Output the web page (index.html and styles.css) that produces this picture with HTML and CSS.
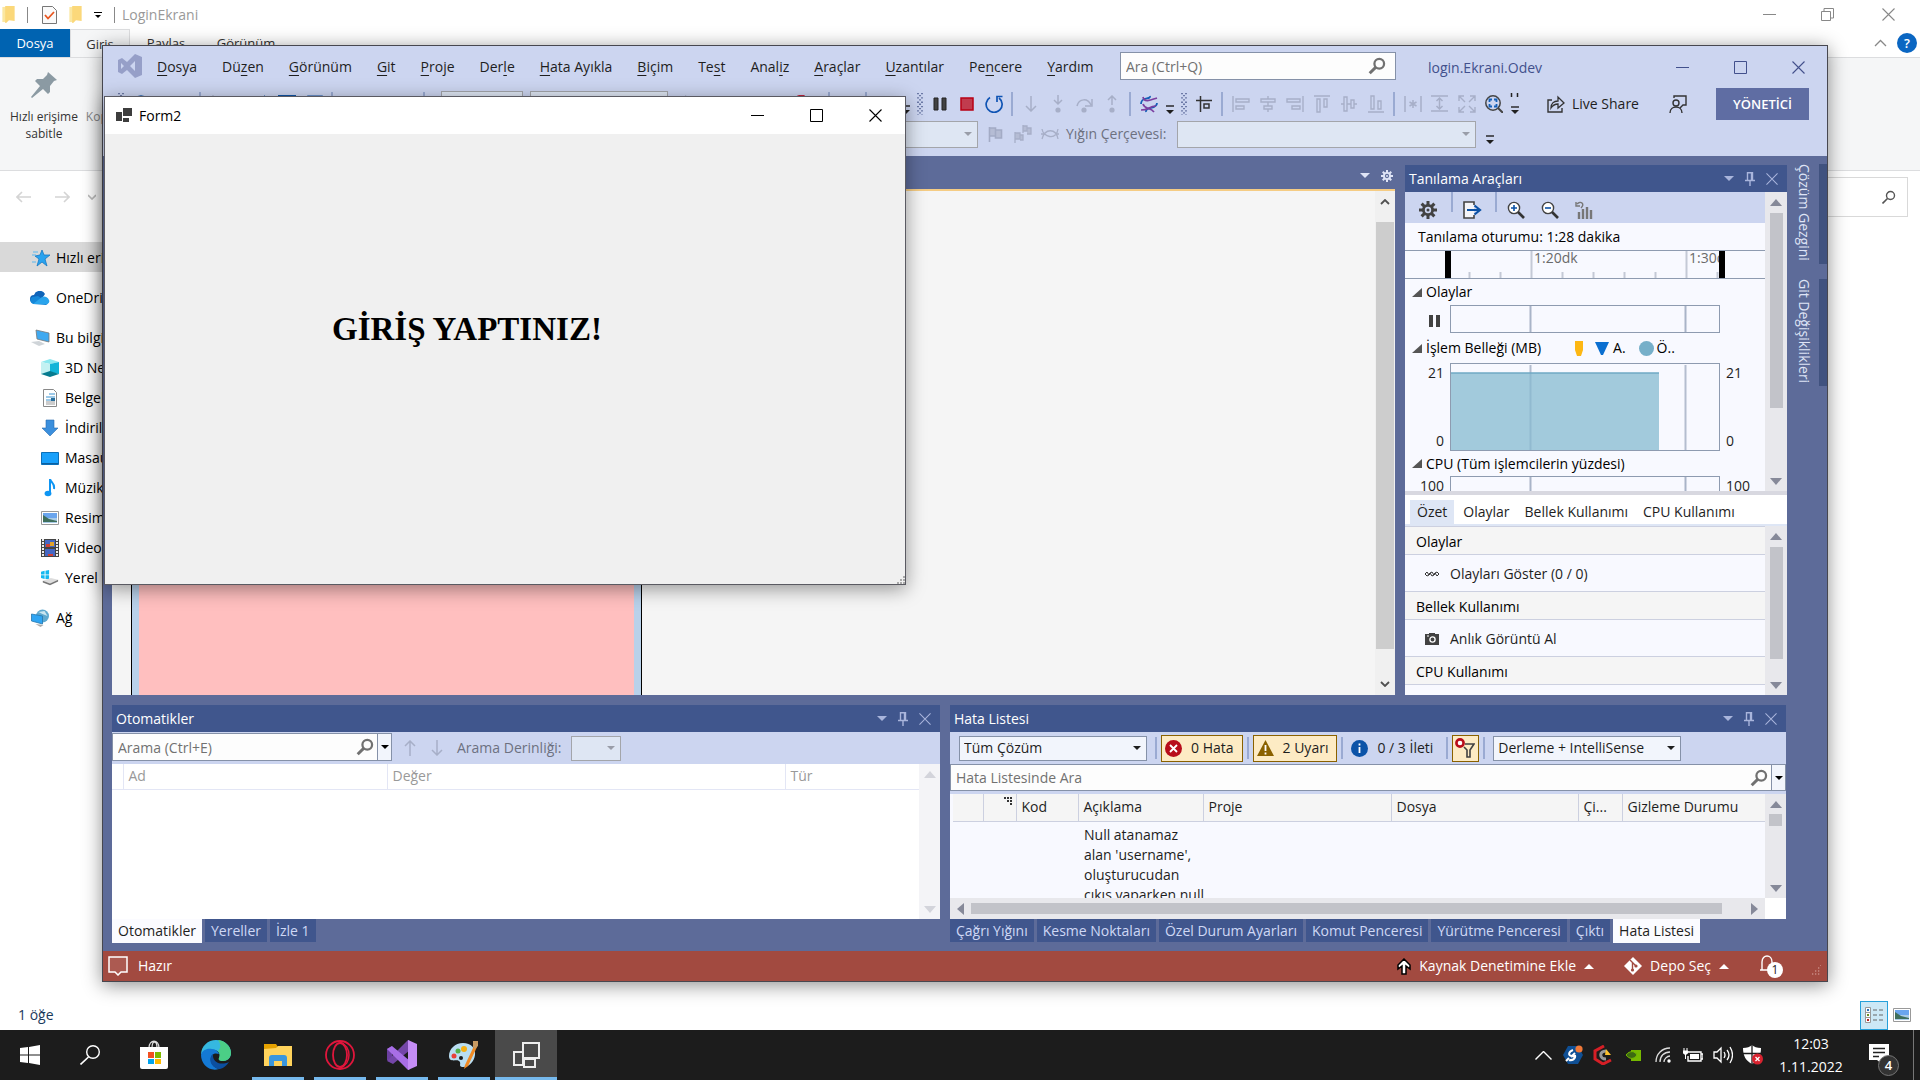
FILE: index.html
```html
<!DOCTYPE html>
<html lang="tr">
<head>
<meta charset="utf-8">
<title>LoginEkrani</title>
<link rel="stylesheet" href="styles.css">
</head>
<body>
<svg class="sprite" aria-hidden="true">
  <symbol id="folder" viewBox="0 0 13 18"><path d="M0 1h4v16H0z" fill="#fbe7a1"/><path d="M3 0h10v16l-6-1-3 3H3z" fill="#fbd87a"/></symbol>
  <symbol id="caret" viewBox="0 0 10 5"><path d="M0 0h10L5 5z" fill="currentColor"/></symbol>
  <symbol id="more" viewBox="0 0 10 10"><path d="M1 1h8M1 1" stroke="currentColor" stroke-width="1.4"/><path d="M1 5h8L5 9z" fill="currentColor"/></symbol>
  <symbol id="mag" viewBox="0 0 16 16"><circle cx="10" cy="6" r="4.3" fill="none" stroke="currentColor" stroke-width="2"/><path d="M7 9l-5.5 5.5" stroke="currentColor" stroke-width="2.6"/></symbol>
  <symbol id="min" viewBox="0 0 13 13"><path d="M0 6.5h13" stroke="currentColor"/></symbol>
  <symbol id="max" viewBox="0 0 13 13"><path d="M.5.5h12v12H.5z" fill="none" stroke="currentColor"/></symbol>
  <symbol id="close" viewBox="0 0 13 13"><path d="M.5.5l12 12M12.5.5l-12 12" stroke="currentColor" stroke-width="1.1"/></symbol>
  <symbol id="pin" viewBox="0 0 10 14"><path d="M2.5 8V.8h5V8M0 8.5h10M5 8v6M6.5 1v7" fill="none" stroke="currentColor" stroke-width="1.4"/></symbol>
  <symbol id="gear" viewBox="0 0 18 18"><g stroke="currentColor" stroke-width="3"><path d="M9 0v18M0 9h18M2.6 2.6l12.8 12.8M15.4 2.6L2.6 15.4"/></g><circle cx="9" cy="9" r="6" fill="currentColor"/><circle cx="9" cy="9" r="3.2" fill="var(--hole)"/><circle cx="9" cy="9" r="1.5" fill="currentColor"/></symbol>
  <symbol id="grip" viewBox="0 0 6 22"><path d="M1 0v22M5 0v22" stroke="#3b4a80" stroke-width="1.3" stroke-dasharray="1.3 3"/><path d="M3 2v20" stroke="#3b4a80" stroke-width="1.3" stroke-dasharray="1.3 3"/></symbol>
  <symbol id="up" viewBox="0 0 12 16"><path d="M6 16V1M1 6l5-5 5 5" fill="none" stroke="currentColor" stroke-width="1.5"/></symbol>
  <symbol id="down" viewBox="0 0 12 16"><path d="M6 0v15M1 10l5 5 5-5" fill="none" stroke="currentColor" stroke-width="1.5"/></symbol>
  <symbol id="picture" viewBox="0 0 18 14"><path d="M.5.5h17v13H.5z" fill="#fff" stroke="#999"/><path d="M2 2h14v5H2z" fill="#6aa5ee"/><path d="M2 7h14v5H2z" fill="#a9cbe8"/><path d="M2 4l6 4 8 2v1H2z" fill="#3f6f5c"/></symbol>
  <symbol id="flag" viewBox="0 0 16 16"><path d="M2 1v15M2 2h6v8H2zM8 4h6v8H8v-2" fill="#b5bcd4" stroke="#a3abc5" stroke-width="1.6"/></symbol>
</svg>

<main class="desktop">
  <section class="explorer" aria-label="LoginEkrani">
    <header class="ex-title">
      <svg width="13" height="17"><use href="#folder"/></svg>
      <i class="bar"></i>
      <svg width="15" height="18" viewBox="0 0 15 18"><path d="M.5.5h10l4 4v13H.5z" fill="#fafafa" stroke="#777"/><path d="M3 9l3 3.500L12 6" fill="none" stroke="#e8551f" stroke-width="1.800"/></svg>
      <svg width="13" height="17"><use href="#folder"/></svg>
      <svg width="8" height="8" viewBox="0 0 8 8"><path d="M0 1.500h8" stroke="#000"/><path d="M1 4h6L4 7z"/></svg>
      <i class="bar"></i>
      <span class="ex-name">LoginEkrani</span>
      <div class="ex-win">
        <button aria-label="Simge durumuna küçült"><svg width="13" height="13"><use href="#min"/></svg></button>
        <button aria-label="Önceki boyut"><svg width="13" height="13" viewBox="0 0 13 13"><path d="M.5 3.500h9v9h-9zM3 3V.5h9.500V10H10" fill="none" stroke="currentColor"/></svg></button>
        <button aria-label="Kapat"><svg width="13" height="13"><use href="#close"/></svg></button>
      </div>
    </header>
    <nav class="ex-tabs">
      <button class="file">Dosya</button><button class="active">Giriş</button><button>Paylaş</button><button>Görünüm</button>
      <div class="ex-help">
        <svg width="13" height="8" viewBox="0 0 13 8"><path d="M1 7l5.500-5.500L12 7" fill="none" stroke="#888" stroke-width="1.300"/></svg>
        <button aria-label="Yardım">?</button>
      </div>
    </nav>
    <div class="ribbon">
      <button class="rb"><svg width="28" height="28" viewBox="0 0 28 28"><path d="M18 1l9 8-3 1-4 5 0 6-2 2-5-5-11 9-1-1 9-11-5-5 2-2 6 0 4-4z" fill="#8b9aa3"/></svg><span>Hızlı erişime sabitle</span></button>
      <button class="rb copy"><svg width="28" height="28" viewBox="0 0 28 28"><path d="M3 1h20v26H3z" fill="#e6edf8" stroke="#a9bcdb"/><path d="M6 5h14M6 9h14M6 13h14M6 17h14M6 21h14" stroke="#b4c5e2"/></svg><span>Kopyala</span></button>
    </div>
    <div class="ex-nav">
      <svg width="15" height="12" viewBox="0 0 15 12"><path d="M15 6H1M6 1L1 6l5 5" fill="none" stroke="#d4d4d4" stroke-width="1.600"/></svg>
      <svg width="15" height="12" viewBox="0 0 15 12"><path d="M0 6h14M9 1l5 5-5 5" fill="none" stroke="#d4d4d4" stroke-width="1.600"/></svg>
      <svg width="8" height="6" viewBox="0 0 8 6"><path d="M0 1l4 4 4-4" fill="none" stroke="#bbb" stroke-width="1.600"/></svg>
      <label class="ex-search"><input aria-label="Ara"><svg width="14" height="14" viewBox="0 0 14 14"><circle cx="8.500" cy="5.500" r="4" fill="none" stroke="#555" stroke-width="1.400"/><path d="M5.500 8.500L.5 13.500" stroke="#555" stroke-width="1.600"/></svg></label>
    </div>
    <ul class="tree">
      <li class="sel"><svg width="18" height="18" viewBox="0 0 18 18"><path d="M10 1l2 5 6 0-5 4 2 7-5-4-5 4 2-7-4-3 5-1z" fill="#29a3ef" stroke="#1479c4" stroke-width=".8"/><path d="M1 3h5M0 6h4M0 13h4" stroke="#5bb7ee"/></svg>Hızlı erişim</li>
      <li class="top"><svg width="20" height="14" viewBox="0 0 20 14"><path d="M4 12a4 4 0 010-8 6 6 0 0111-1l-6 9z" fill="#0f64b9"/><path d="M3 13a4 4 0 01-1-7l6-1 10 7a3 3 0 01-2 2z" fill="#1587d8"/><path d="M3 13l9-7a5 5 0 017 3 3 3 0 01-2 4z" fill="#2aa4ec"/></svg>OneDrive</li>
      <li class="top"><svg width="20" height="18" viewBox="0 0 20 18"><path d="M6 1l13 3v9L7 10z" fill="#3fa9f0" stroke="#777" stroke-width=".8"/><path d="M1 13l8-1 6 3-6 2z" fill="#cfd4d8"/></svg>Bu bilgisayar</li>
      <li class="sub"><svg width="18" height="18" viewBox="0 0 18 18"><path d="M0 3l9-3 9 3-9 2z" fill="#8ce8ef"/><path d="M0 3l9 2v8l-9 2z" fill="#c3f1f2"/><path d="M18 3L9 5v8l9 2z" fill="#12b4d8"/><path d="M0 15l9-3 9 3-9 3z" fill="#067b8f"/></svg>3D Nesneler</li>
      <li class="sub"><svg width="18" height="18" viewBox="0 0 18 18"><path d="M2.500.5h10l3 3v14h-13z" fill="#fff" stroke="#888"/><path d="M5 8h9M8 5h6M5 11h5" stroke="#3a93d0"/><path d="M5 13h9M5 15h9" stroke="#999"/><path d="M10 9h4v3h-4z" fill="#2a6f9c"/></svg>Belgeler</li>
      <li class="sub"><svg width="18" height="18" viewBox="0 0 18 18"><path d="M5 1h8v8h4l-8 8-8-8h4z" fill="#3b8fdd" stroke="#2a6db0" stroke-width=".6"/></svg>İndirilenler</li>
      <li class="sub"><svg width="18" height="18" viewBox="0 0 18 18"><path d="M.5 3.500h17v12H.5z" fill="#18a0fb" stroke="#0b6fb8"/><path d="M1 14.500h16" stroke="#0b5f9f"/></svg>Masaüstü</li>
      <li class="sub"><svg width="18" height="18" viewBox="0 0 18 18"><ellipse cx="7" cy="14.500" rx="3.400" ry="2.700" fill="#0e95f3"/><path d="M9 14V0c1 4 5 4 4 10" fill="none" stroke="#0e95f3" stroke-width="2"/></svg>Müzik</li>
      <li class="sub"><svg width="18" height="14"><use href="#picture"/></svg>Resimler</li>
      <li class="sub"><svg width="18" height="18" viewBox="0 0 18 18"><path d="M0 0h18v18H0z" fill="#444"/><path d="M2 0v18M16 0v18" stroke="#eee" stroke-width="2" stroke-dasharray="2 1"/><path d="M4 1h10v7H4zM4 10h10v7H4z" fill="#4668c4"/><path d="M9 3h4v4H9z" fill="#e2a32c"/><path d="M5 5h4v3H5zM7 15h5v2H7z" fill="#cf4037"/></svg>Videolar</li>
      <li class="sub"><svg width="18" height="18" viewBox="0 0 20 18"><path d="M0 2l4-1v4H0zM5 1l4-1v5H5zM0 6h4v4L0 9zM5 6h4v4H5z" fill="#14b8f0"/><path d="M2 12l9-3 8 2-9 4z" fill="#ddd"/><path d="M2 12l8 3v2l-8-3zM19 11l-9 4v2l9-4z" fill="#777"/></svg>Yerel</li>
      <li class="top"><svg width="20" height="18" viewBox="0 0 19 18"><circle cx="12" cy="7" r="6.500" fill="#5fa9cf"/><path d="M8 3l6-1 3 5-5-2z" fill="#cbe6f0"/><path d="M1 5l11 2v8L1 12z" fill="#2fa5f3" stroke="#2376ad" stroke-width=".8"/><path d="M5 15l8 1-3 2z" fill="#aaa"/></svg>Ağ</li>
    </ul>
    <footer class="ex-status"><span>1 öğe</span>
      <div class="views">
        <button class="on" aria-label="Ayrıntılar"><svg width="18" height="16" viewBox="0 0 18 16"><path d="M.5.5h5v15h-5zM.5 5.500h5M.5 10.500h5" fill="#fff" stroke="#999"/><path d="M8 3h4M14 3h4M8 8h4M14 8h4M8 13h4M14 13h4" stroke="#666"/><path d="M2 2h2v2H2z" fill="#2f6fb5"/><path d="M2 7h2v2H2z" fill="#6b8e23"/><path d="M2 12h2v2H2z" fill="#b22"/></svg></button>
        <button aria-label="Büyük simgeler"><svg width="18" height="14"><use href="#picture"/></svg></button>
      </div>
    </footer>
  </section>

  <section class="vs" aria-label="Visual Studio">
    <header class="vs-head">
      <div class="menu-row">
        <svg class="vs-logo" width="24" height="24" viewBox="0 0 24 24"><path d="M17 0l7 3v18l-7 3-8-8-5 4-4-2V6l4-2 5 4zM17 7l-5 5 5 5zM3 9v6l3-3z" fill="#969fc8" fill-rule="evenodd"/></svg>
        <nav class="menu">
          <button><u>D</u>osya</button><button>Dü<u>z</u>en</button><button><u>G</u>örünüm</button><button><u>G</u>it</button><button><u>P</u>roje</button><button>Der<u>l</u>e</button><button><u>H</u>ata Ayıkla</button><button><u>B</u>içim</button><button>Te<u>s</u>t</button><button>Anal<u>i</u>z</button><button><u>A</u>raçlar</button><button><u>U</u>zantılar</button><button>Pe<u>n</u>cere</button><button><u>Y</u>ardım</button>
        </nav>
        <label class="search quick"><input placeholder="Ara (Ctrl+Q)" aria-label="Ara"><svg width="18" height="18"><use href="#mag"/></svg></label>
        <span class="solution">login.Ekrani.Odev</span>
        <div class="vs-win">
          <button aria-label="Simge durumuna küçült"><svg width="13" height="13"><use href="#min"/></svg></button>
          <button aria-label="Ekranı kapla"><svg width="13" height="13"><use href="#max"/></svg></button>
          <button aria-label="Kapat"><svg width="13" height="13"><use href="#close"/></svg></button>
        </div>
      </div>
      <div class="tools">
        <div class="tools-left">
          <span class="gripcell"><svg width="6" height="22"><use href="#grip"/></svg></span>
          <button class="tool"><svg width="18" height="18" viewBox="0 0 16 16"><circle cx="8" cy="8" r="7" fill="none" stroke="#0f54a6" stroke-width="1.500"/><path d="M12 8H5M8 5L5 8l3 3" fill="none" stroke="#0f54a6"/></svg></button><span class="gap14"></span>
          <button class="tool"><svg width="18" height="18" viewBox="0 0 16 16"><circle cx="8" cy="8" r="6" fill="none" stroke="#a7afc8" stroke-width="1.500"/></svg></button>
          <i class="sep"></i>
          <button class="tool"><svg width="20" height="18" viewBox="0 0 20 18"><path d="M4 0v8M0 4h8M1 1l6 6M7 1L1 7M10 3h9v14h-9z" fill="none" stroke="#a3abc5"/></svg></button><span class="gap14"></span>
          <button class="tool"><svg width="18" height="18" viewBox="0 0 18 18"><path d="M9 5l5-5v5z" fill="#0f54a6"/></svg></button>
          <button class="tool"><svg width="18" height="18" viewBox="0 0 18 18"><path d="M1 1h16v16H1z" fill="#7f9cd0" stroke="#0f54a6" stroke-width="2"/><path d="M5 1h8v6H5z" fill="#ccd5f0"/></svg></button>
          <button class="tool"><svg width="18" height="18" viewBox="0 0 18 18"><path d="M3 1h14v14H3z" fill="#a3b8df" stroke="#4d7cc0" stroke-width="1.500"/></svg></button>
          <i class="sep"></i>
          <button class="tool"><svg width="18" height="18" viewBox="0 0 18 18"><path d="M3 1v7h6M4 7c2-8 14-7 11 3" fill="none" stroke="#a3abc5" stroke-width="1.500"/></svg></button><span class="gap14"></span>
          <button class="tool"><svg width="18" height="18" viewBox="0 0 18 18"><path d="M15 1v7H9M14 7C12-1 0 0 3 10" fill="none" stroke="#a3abc5" stroke-width="1.500"/></svg></button><span class="gap14"></span>
          <i class="sep"></i>
          <select class="combo off w80" disabled aria-label="Yapılandırma"></select>
          <select class="combo off w140" disabled aria-label="Platform"></select>
          <button class="tool"><svg width="18" height="18" viewBox="0 0 18 18"><path d="M2 0l14 8L2 16z" fill="#a9b1cb"/></svg></button>
          <span class="fill"></span>
          <button class="tool"><svg width="18" height="18" viewBox="0 0 18 18"><path d="M17 0c-7-1-9 1-10 4l-5 5 3 8h7l3-6-2-6z" fill="#c2233c"/></svg></button><span class="gap14"></span>
          <i class="sep"></i>
          <button class="tool"><svg width="18" height="18" viewBox="0 0 18 18"><path d="M1 2h9l2 3h5v11H1z" fill="#c59a45"/></svg></button>
          <i class="sep"></i>
          <button class="tool"><svg width="18" height="18" viewBox="0 0 18 18"><path d="M1 2h16v12H1z" fill="none" stroke="#424242" stroke-width="2"/></svg></button>
          <span class="morecell"><svg width="10" height="10"><use href="#more"/></svg></span>
        </div>
        <span class="gripcell"><svg width="6" height="22"><use href="#grip"/></svg></span>
        <button class="tool" aria-label="Duraklat"><svg width="14" height="14" viewBox="0 0 14 14"><path d="M1 1h4v12H1zM9 1h4v12H9z" fill="#424242" stroke="#222"/></svg></button>
        <button class="tool" aria-label="Durdur"><svg width="14" height="14" viewBox="0 0 14 14"><path d="M1 1h12v12H1z" fill="#c13c4e" stroke="#b80015" stroke-width="1.500"/></svg></button>
        <button class="tool" aria-label="Yeniden başlat"><svg width="18" height="18" viewBox="0 0 18 18"><path d="M5 2.500A8 8 0 1014 3" fill="none" stroke="#0f54b4" stroke-width="1.700"/><path d="M12 7V1.500h5.500" fill="none" stroke="#0f54b4" stroke-width="1.700"/></svg></button>
        <i class="sep"></i>
        <button class="tool dim" aria-label="Sonraki deyim"><svg width="14" height="16"><use href="#down"/></svg></button>
        <button class="tool dim" aria-label="Adımla"><svg width="12" height="18" viewBox="0 0 12 18"><path d="M6 0v9M2 5l4 4 4-4" fill="none" stroke="currentColor" stroke-width="1.500"/><circle cx="6" cy="15" r="2.600" fill="currentColor"/></svg></button>
        <button class="tool dim" aria-label="Üzerinden geç"><svg width="18" height="18" viewBox="0 0 18 18"><path d="M1 11C3 3 12 3 15 10M16 4v7H9" fill="none" stroke="currentColor" stroke-width="1.500"/><circle cx="8" cy="15" r="2.600" fill="currentColor"/></svg></button>
        <button class="tool dim" aria-label="Dışarı adımla"><svg width="12" height="18" viewBox="0 0 12 18"><path d="M6 10V1M2 5l4-4 4 4" fill="none" stroke="currentColor" stroke-width="1.500"/><circle cx="6" cy="15" r="2.600" fill="currentColor"/></svg></button>
        <i class="sep"></i>
        <button class="tool" aria-label="İş parçacıkları"><svg width="18" height="18" viewBox="0 0 18 18"><path d="M1 9c0-8 10-4 9-8M6 17c-1-6 11-2 11-9" fill="none" stroke="#1560b8" stroke-width="1.800"/><path d="M3 2c1 6 8 3 14 1M1 15c8 0 8-4 15-4M3 9c2 6 7 3 11 8" fill="none" stroke="#7b3fa0" stroke-width="1.700"/></svg></button>
        <span class="morecell"><svg width="10" height="10"><use href="#more"/></svg></span>
        <span class="gripcell"><svg width="6" height="22"><use href="#grip"/></svg></span>
        <button class="tool" aria-label="Kılavuza hizala"><svg width="16" height="16" viewBox="0 0 16 16"><path d="M0 4.500h16M4.500 0v16M8 8h5v4H8z" fill="none" stroke="#333" stroke-width="1.500"/></svg></button>
        <i class="sep"></i>
        <button class="tool dim" aria-label="Sola hizala"><svg width="18" height="16" viewBox="0 0 18 16"><path d="M1 0v16M4 3h13v3H4zM4 10h8v3H4z" fill="none" stroke="currentColor" stroke-width="1.400"/></svg></button>
        <button class="tool dim" aria-label="Ortala"><svg width="16" height="16" viewBox="0 0 16 16"><path d="M8 0v3M8 6v4M8 13v3M1 3h14v3H1zM4 10h8v3H4z" fill="none" stroke="currentColor" stroke-width="1.400"/></svg></button>
        <button class="tool dim" aria-label="Sağa hizala"><svg width="18" height="16" viewBox="0 0 18 16"><path d="M17 0v16M1 3h13v3H1zM6 10h8v3H6z" fill="none" stroke="currentColor" stroke-width="1.400"/></svg></button>
        <button class="tool dim" aria-label="Üste hizala"><svg width="16" height="18" viewBox="0 0 16 18"><path d="M0 1h16M3 4h3v13H3zM10 4h3v8h-3z" fill="none" stroke="currentColor" stroke-width="1.400"/></svg></button>
        <button class="tool dim" aria-label="Dikey ortala"><svg width="16" height="16" viewBox="0 0 16 16"><path d="M0 8h3M6 8h4M13 8h3M3 1h3v14H3zM10 4h3v8h-3z" fill="none" stroke="currentColor" stroke-width="1.400"/></svg></button>
        <button class="tool dim" aria-label="Alta hizala"><svg width="16" height="18" viewBox="0 0 16 18"><path d="M0 17h16M3 1h3v13H3zM10 6h3v8h-3z" fill="none" stroke="currentColor" stroke-width="1.400"/></svg></button>
        <i class="sep"></i>
        <button class="tool dim" aria-label="Yatay aralık"><svg width="18" height="16" viewBox="0 0 18 16"><path d="M1 0v16M17 0v16M9 4v8M5.500 6l7 4M12.500 6l-7 4" fill="none" stroke="currentColor" stroke-width="1.500"/></svg></button>
        <button class="tool dim" aria-label="Dikey aralık"><svg width="17" height="17" viewBox="0 0 17 17"><path d="M0 1h17M0 16h17M8.500 3v11M5.500 6l3-3 3 3M5.500 11l3 3 3-3" fill="none" stroke="currentColor" stroke-width="1.500"/></svg></button>
        <button class="tool dim" aria-label="Sığdır"><svg width="18" height="18" viewBox="0 0 18 18"><path d="M1 6V1h5M1 1l6 6M12 1h5v5M17 1l-6 6M1 12v5h5M1 17l6-6M12 17h5v-5M17 17l-6-6" fill="none" stroke="currentColor" stroke-width="1.400"/></svg></button>
        <button class="tool" aria-label="Yakınlaştır"><svg width="18" height="18" viewBox="0 0 18 18"><circle cx="8" cy="8" r="7.200" fill="none" stroke="#444" stroke-width="1.500"/><path d="M13 13l5 5" stroke="#444" stroke-width="2"/><path d="M4.500 7V4.500H7M9 4.500h2.500V7M4.500 9v2.500H7M9 11.500h2.500V9" fill="none" stroke="#1560b8" stroke-width="1.800"/></svg></button>
        <span class="morecell tall"><svg width="10" height="22" viewBox="0 0 10 22"><path d="M1.500 0v4M7.500 0v4" stroke="#222" stroke-width="1.500"/><path d="M1 14h8" stroke="#222" stroke-width="1.400"/><path d="M1 17h8l-4 4z" fill="#222"/></svg></span>
        <button class="share"><svg width="18" height="18" viewBox="0 0 18 18"><path d="M5 5H1v12h14v-4" fill="none" stroke="#333" stroke-width="1.400"/><path d="M4 13c0-5 3-7 7-7V2l6 6-6 5V9c-3 0-5 1-7 4z" fill="none" stroke="#333" stroke-width="1.300"/></svg>Live Share</button>
        <button class="tool feedback" aria-label="Geri bildirim"><svg width="18" height="18" viewBox="0 0 18 18"><path d="M5 3V1h12v9h-3l-3 3" fill="none" stroke="#333" stroke-width="1.400"/><circle cx="7" cy="8" r="3" fill="none" stroke="#333" stroke-width="1.400"/><path d="M1 18c0-8 12-8 12 0" fill="none" stroke="#333" stroke-width="1.400"/></svg></button>
        <button class="admin">YÖNETİCİ</button>
      </div>
      <div class="tools second">
        <select class="combo off thread" disabled aria-label="İş parçacığı"></select>
        <button class="tool" aria-label="Bayrak"><svg width="17" height="16"><use href="#flag"/></svg></button>
        <button class="tool dim" aria-label="Bayraklar"><svg width="18" height="18" viewBox="0 0 18 18"><path d="M1 7v11M1 8h5v6H1zM6 10h3v5H6M9 0v8M9 1h4v5H9zM13 3h4v6h-4" fill="#b5bcd4" stroke="currentColor" stroke-width="1.300"/></svg></button>
        <button class="tool dim" aria-label="Dalga"><svg width="18" height="14" viewBox="0 0 18 14"><path d="M1 2c1 8 14 12 16 0M1 12C4 1 15 1 17 12M0 7h3M15 7h3" fill="none" stroke="currentColor" stroke-width="1.300"/></svg></button>
        <label class="stack" for="frame">Yığın Çerçevesi:</label>
        <select class="combo off frame" id="frame" disabled></select>
        <span class="morecell low"><svg width="10" height="10"><use href="#more"/></svg></span>
      </div>
    </header>

    <div class="vs-main">
      <div class="docks">
        <div class="upper">
          <section class="doc">
            <div class="doc-tabs"><svg width="10" height="5"><use href="#caret"/></svg><svg class="docgear" width="12" height="12"><use href="#gear"/></svg></div>
            <div class="designer">
              <div class="canvas"><div class="form-preview"></div></div>
              <div class="wscroll">
                <svg width="10" height="6" viewBox="0 0 10 6"><path d="M1 5l4-4 4 4" fill="none" stroke="#505050" stroke-width="1.800"/></svg>
                <div class="thumb"></div>
                <svg width="10" height="6" viewBox="0 0 10 6"><path d="M1 1l4 4 4-4" fill="none" stroke="#505050" stroke-width="1.800"/></svg>
              </div>
            </div>
          </section>
          <section class="diag">
            <header class="panel-title"><h2>Tanılama Araçları</h2><span class="ctl"><svg width="10" height="5"><use href="#caret"/></svg><svg width="10" height="14"><use href="#pin"/></svg><svg width="12" height="12"><use href="#close"/></svg></span></header>
            <div class="charts">
              <div class="charts-body">
                <div class="diag-tools">
                  <button aria-label="Ayarlar"><svg class="dgear" width="18" height="18"><use href="#gear"/></svg></button>
                  <i></i>
                  <button aria-label="Çıktı"><svg width="19" height="18" viewBox="0 0 19 18"><path d="M11 4V1H1v16h10v-3" fill="#f4f4f8" stroke="#424242" stroke-width="1.600"/><path d="M4 9h12M11.500 4.500L17 9l-5.500 4.500" fill="none" stroke="#0b51a5" stroke-width="2.200"/></svg></button>
                  <i></i>
                  <button aria-label="Yakınlaştır"><svg width="18" height="18" viewBox="0 0 18 18"><circle cx="7" cy="7" r="5.600" fill="#fff" stroke="#424242" stroke-width="1.400"/><path d="M11 11l6 6" stroke="#333" stroke-width="2.600"/><path d="M7 4v6M4 7h6" stroke="#0b51a5" stroke-width="1.600"/></svg></button>
                  <button aria-label="Uzaklaştır"><svg width="18" height="18" viewBox="0 0 18 18"><circle cx="7" cy="7" r="5.600" fill="#fff" stroke="#424242" stroke-width="1.400"/><path d="M11 11l6 6" stroke="#333" stroke-width="2.600"/><path d="M4 7h6" stroke="#0b51a5" stroke-width="1.600"/></svg></button>
                  <button aria-label="Görünümü sıfırla"><svg width="18" height="18" viewBox="0 0 18 18"><path d="M1 1v4h4M2 3c4-4 8 0 4 4" fill="none" stroke="#777" stroke-width="1.400"/><path d="M4 11v7M8 8v10M12 6v12M16 9v9" stroke="#777" stroke-width="2.400"/></svg></button>
                </div>
                <p class="session">Tanılama oturumu: 1:28 dakika</p>
                <div class="ruler"><svg width="360" height="27">
                  <path d="M126.500 0v27M281.500 0v27" stroke="#c4c9d6" stroke-width="2"/><path d="M64.500 21v6M95.500 21v6M157.500 21v6M188.500 21v6M219.500 21v6M250.500 21v6M312.500 21v6" stroke="#c4c9d6" stroke-width="2"/>
                  <svg x="0" y="0" width="316" height="27"><text x="129" y="12">1:20dk</text><text x="284" y="12">1:30dk</text></svg>
                  <path d="M40 0h6v27h-6zM314 0h6v27h-6z"/></svg></div>
                <h3 class="group"><svg width="10" height="9" viewBox="0 0 10 9"><path d="M10 0v9H0z" fill="#555"/></svg>Olaylar</h3>
                <div class="plot"><span class="lbl mid"><svg width="11" height="12" viewBox="0 0 11 12"><path d="M0 0h4v12H0zM7 0h4v12H7z" fill="#424242"/></svg></span><svg class="box" width="270" height="28"><path d="M80.500 0v28M235.500 0v28" stroke="#a9b4c8" stroke-width="2"/></svg></div>
                <h3 class="group mem"><svg width="10" height="9" viewBox="0 0 10 9"><path d="M10 0v9H0z" fill="#555"/></svg>İşlem Belleği (MB)
                  <span class="legend"><svg width="8" height="15" viewBox="0 0 8 15"><path d="M0 0h8v9l-2 6H2L0 9z" fill="#fdb713"/></svg><svg width="14" height="13" viewBox="0 0 14 13"><path d="M0 0h14L8 13H6z" fill="#0b6fd0"/></svg><b>A.</b><svg width="15" height="15" viewBox="0 0 15 15"><circle cx="7.500" cy="7.500" r="7.500" fill="#76afc9"/></svg><b>Ö..</b></span></h3>
                <div class="plot tall"><span class="lbl"><b>21</b><b>0</b></span><svg class="box" width="270" height="88"><path d="M80.500 2v86M235.500 2v86" stroke="#b4bdcf" stroke-width="2"/><path d="M0 10h209v78H0z" fill="#86b9d0" fill-opacity=".75"/><path d="M0 10h70l90 0h49" fill="none" stroke="#6fa9c4" stroke-width="1.500"/></svg><span class="lbl right"><b>21</b><b>0</b></span></div>
                <h3 class="group cpu"><svg width="10" height="9" viewBox="0 0 10 9"><path d="M10 0v9H0z" fill="#555"/></svg>CPU (Tüm işlemcilerin yüzdesi)</h3>
                <div class="plot"><span class="lbl"><b>100</b></span><svg class="box" width="270" height="28"><path d="M80.500 0v28M235.500 0v28" stroke="#a9b4c8" stroke-width="2"/></svg><span class="lbl right"><b>100</b></span></div>
              </div>
              <div class="vscroll"><svg width="12" height="7" viewBox="0 0 12 7"><path d="M0 7l6-7 6 7z"/></svg><div class="thumb t1"></div><svg width="12" height="7" viewBox="0 0 12 7"><path d="M0 0l6 7 6-7z"/></svg></div>
            </div>
            <nav class="diag-tabs"><button class="on">Özet</button><button>Olaylar</button><button>Bellek Kullanımı</button><button>CPU Kullanımı</button></nav>
            <div class="summary">
              <div class="sum-body">
                <h3>Olaylar</h3>
                <button><svg width="14" height="8" viewBox="0 0 14 8"><path d="M0 4l2-2 2 3 1-2 2-1 2 3 1-2 2-1 2 2-2 2-2-3-1 2-2 1-2-3-1 2-2 1z" fill="none" stroke="#333"/></svg>Olayları Göster (0 / 0)</button>
                <h3>Bellek Kullanımı</h3>
                <button><svg width="14" height="12" viewBox="0 0 14 12"><path d="M0 1h4V0h6v1h4v11H0z" fill="#424242"/><circle cx="7.500" cy="6.500" r="2.600" fill="none" stroke="#fff" stroke-width="1.300"/><path d="M2 3h2" stroke="#fff"/></svg>Anlık Görüntü Al</button>
                <h3>CPU Kullanımı</h3>
                <button class="cut"></button>
              </div>
              <div class="vscroll"><svg width="12" height="7" viewBox="0 0 12 7"><path d="M0 7l6-7 6 7z"/></svg><div class="thumb t2"></div><svg width="12" height="7" viewBox="0 0 12 7"><path d="M0 0l6 7 6-7z"/></svg></div>
            </div>
          </section>
        </div>

        <div class="lower">
          <section class="dock autos">
            <header class="panel-title"><h2>Otomatikler</h2><span class="ctl"><svg width="10" height="5"><use href="#caret"/></svg><svg width="10" height="14"><use href="#pin"/></svg><svg width="12" height="12"><use href="#close"/></svg></span></header>
            <div class="dock-tools">
              <label class="search auto-search"><input placeholder="Arama (Ctrl+E)" aria-label="Arama"><svg width="18" height="18"><use href="#mag"/></svg><button class="drop" aria-label="Seçenekler"><svg width="8" height="4"><use href="#caret"/></svg></button></label>
              <svg class="arrow" width="14" height="16"><use href="#up"/></svg><svg class="arrow" width="14" height="16"><use href="#down"/></svg>
              <label class="depth-label" for="depth">Arama Derinliği:</label>
              <select class="combo off depth" id="depth" disabled></select>
            </div>
            <div class="autos-body">
              <table><colgroup><col class="a0"><col class="a1"><col class="a2"><col></colgroup><thead><tr><th></th><th>Ad</th><th>Değer</th><th>Tür</th></tr></thead></table>
              <div class="vscroll faint"><svg width="12" height="7" viewBox="0 0 12 7"><path d="M0 7l6-7 6 7z"/></svg><svg class="end" width="12" height="7" viewBox="0 0 12 7"><path d="M0 0l6 7 6-7z"/></svg></div>
            </div>
            <nav class="dock-tabs"><button class="on">Otomatikler</button><button>Yereller</button><button>İzle 1</button></nav>
          </section>

          <section class="dock errors">
            <header class="panel-title"><h2>Hata Listesi</h2><span class="ctl"><svg width="10" height="5"><use href="#caret"/></svg><svg width="10" height="14"><use href="#pin"/></svg><svg width="12" height="12"><use href="#close"/></svg></span></header>
            <div class="dock-tools err-tools">
              <select class="combo" aria-label="Kapsam"><option>Tüm Çözüm</option></select>
              <i class="vr"></i>
              <button class="flt"><svg width="17" height="17" viewBox="0 0 17 17"><circle cx="8.500" cy="8.500" r="8.500" fill="#b80d1b"/><path d="M5 5l7 7M12 5l-7 7" stroke="#fff" stroke-width="1.800"/></svg>0 Hata</button>
              <i class="vr"></i>
              <button class="flt"><svg width="17" height="16" viewBox="0 0 17 16"><path d="M8.500 0L17 16H0z" fill="#8a6100"/><path d="M8.500 5v6M8.500 12.500v2" stroke="#fff" stroke-width="1.800"/></svg>2 Uyarı</button>
              <i class="vr"></i>
              <button class="flt plain"><svg width="17" height="17" viewBox="0 0 17 17"><circle cx="8.500" cy="8.500" r="8.500" fill="#0b53a8"/><path d="M8.500 7v6M8.500 3.500v2" stroke="#fff" stroke-width="1.800"/></svg>0 / 3 İleti</button>
              <i class="vr"></i>
              <button class="flt sq" aria-label="Filtre"><svg width="20" height="20" viewBox="0 0 20 20"><circle cx="5" cy="5" r="3.600" fill="#fff" stroke="#b80d1b" stroke-width="2.600"/><path d="M10 6h9l-4 6v7h-3v-7l-3-3" fill="none" stroke="#424242" stroke-width="1.600"/></svg></button>
              <i class="vr"></i>
              <select class="combo" aria-label="Kaynak"><option>Derleme + IntelliSense</option></select>
            </div>
            <label class="search err-search"><input placeholder="Hata Listesinde Ara" aria-label="Hata Listesinde Ara"><svg width="18" height="18"><use href="#mag"/></svg><button class="drop" aria-label="Seçenekler"><svg width="8" height="4"><use href="#caret"/></svg></button></label>
            <div class="err-body">
              <div class="err-view">
                <table><colgroup><col class="e0"><col class="e1"><col class="e2"><col class="e3"><col class="e4"><col class="e5"><col class="e6"><col></colgroup>
                  <thead><tr><th></th><th class="sorter"><svg width="8" height="8" viewBox="0 0 8 8"><path d="M0 1h8M3 4h5M6 7h2" stroke="#333" stroke-width="2" stroke-dasharray="2 1"/></svg></th><th>Kod</th><th>Açıklama</th><th>Proje</th><th>Dosya</th><th>Çi...</th><th>Gizleme Durumu</th></tr></thead>
                  <tbody><tr><td></td><td></td><td></td><td>Null atanamaz<br>alan 'username',<br>oluşturucudan<br>çıkış yaparken null</td><td></td><td></td><td></td><td></td></tr></tbody></table>
              </div>
              <div class="vscroll"><svg width="12" height="7" viewBox="0 0 12 7"><path d="M0 7l6-7 6 7z"/></svg><div class="thumb t3"></div><svg class="end" width="12" height="7" viewBox="0 0 12 7"><path d="M0 0l6 7 6-7z"/></svg></div>
              <div class="hscroll"><svg width="7" height="12" viewBox="0 0 7 12"><path d="M7 0v12L0 6z"/></svg><div class="hthumb"></div><svg width="7" height="12" viewBox="0 0 7 12"><path d="M0 0v12l7-6z"/></svg></div>
            </div>
            <nav class="dock-tabs"><button>Çağrı Yığını</button><button>Kesme Noktaları</button><button>Özel Durum Ayarları</button><button>Komut Penceresi</button><button>Yürütme Penceresi</button><button>Çıktı</button><button class="on">Hata Listesi</button></nav>
          </section>
        </div>
      </div>
      <nav class="side"><button>Çözüm Gezgini</button><button>Git Değişiklikleri</button></nav>
    </div>

    <footer class="vs-status">
      <svg width="20" height="20" viewBox="0 0 20 20"><path d="M1 1h18v15h-6l-3 3-3-3H1z" fill="#ac5a51" stroke="#fff" stroke-width="1.500"/></svg>
      <span class="ready">Hazır</span>
      <button><svg width="14" height="17" viewBox="0 0 14 17"><path d="M7 1l6 6v4L9 8v8H5V8l-4 3V7z" fill="#fff" stroke="#000" stroke-width="1.500"/></svg>Kaynak Denetimine Ekle<svg width="10" height="5" viewBox="0 0 10 5"><path d="M0 5l5-5 5 5z" fill="#fff"/></svg></button>
      <button><svg width="18" height="18" viewBox="0 0 18 18"><path d="M9 0l9 9-9 9-9-9z" fill="#fff"/><path d="M6 3l6 6M8.500 5.500V13" stroke="#a24a40" stroke-width="1.400"/><circle cx="8.500" cy="13" r="1.600" fill="#a24a40"/><circle cx="12" cy="9" r="1.600" fill="#a24a40"/></svg>Depo Seç<svg width="10" height="5" viewBox="0 0 10 5"><path d="M0 5l5-5 5 5z" fill="#fff"/></svg></button>
      <button class="bell" aria-label="Bildirimler"><svg width="16" height="17" viewBox="0 0 16 17"><path d="M1 15h14M3 15V7c0-8 10-8 10 0v8" fill="none" stroke="#fff" stroke-width="1.400"/></svg><span class="count">1</span></button>
      <svg class="sizer" width="10" height="10" viewBox="0 0 10 10"><path d="M1 9h9M4 6h6M7 3h3M9 0h1" stroke="#c98a83" stroke-width="1.300" stroke-dasharray="1.300 1.700"/></svg>
    </footer>
  </section>

  <section class="form2" aria-label="Form2">
    <header>
      <svg width="16" height="15" viewBox="0 0 16 15"><path d="M7 0h9v8H7zM0 4h6v9H0zM7 10h6v4H7z" fill="#3d3d3d"/></svg>
      <h1>Form2</h1>
      <div class="form-win">
        <button aria-label="Simge durumuna küçült"><svg width="13" height="13"><use href="#min"/></svg></button>
        <button aria-label="Ekranı kapla"><svg width="13" height="13"><use href="#max"/></svg></button>
        <button aria-label="Kapat"><svg width="13" height="13"><use href="#close"/></svg></button>
      </div>
    </header>
    <p>GİRİŞ YAPTINIZ!</p>
    <svg class="resize" width="9" height="9" viewBox="0 0 9 9"><path d="M1 8h8M4 5h5M7 2h2" stroke="#aaa" stroke-width="2" stroke-dasharray="2 1"/></svg>
  </section>
</main>

<footer class="taskbar">
  <button class="app start" aria-label="Başlat"><svg width="20" height="20" viewBox="0 0 20 20"><path d="M0 3l8-1v7.500H0zM9 2l11-2v9.500H9zM0 10.500h8V18l-8-1zM9 10.500h11V20L9 18z" fill="#fff"/></svg></button>
  <button class="app find" aria-label="Ara"><svg width="20" height="20" viewBox="0 0 20 20"><circle cx="13" cy="7" r="6.300" fill="none" stroke="#fff" stroke-width="1.400"/><path d="M8.500 12L.5 19.500" stroke="#fff" stroke-width="1.600"/></svg></button>
  <button class="app" aria-label="Microsoft Store"><svg width="30" height="30" viewBox="0 0 30 30"><path d="M10 8c0-9 10-9 10 0M13 8c0-8 5-8 5 0" fill="none" stroke="#ddd" stroke-width="1.300"/><path d="M1 7h28v20a2 2 0 01-2 2H3a2 2 0 01-2-2z" fill="#fff"/><path d="M9 12h6v6H9z" fill="#f25022"/><path d="M16 12h6v6h-6z" fill="#7fba00"/><path d="M9 19h6v5H9z" fill="#00a4ef"/><path d="M16 19h6v5h-6z" fill="#ffb900"/></svg></button>
  <button class="app" aria-label="Edge"><svg width="30" height="30" viewBox="0 0 30 30"><path d="M0 15C0 6 7 0 15 0c9 0 15 6 15 13 0 5-4 8-8 8-3 0-5-1-4-3 2-3 0-8-6-8C5 10 0 14 0 15z" fill="#35b8e0"/><path d="M17 0c8 1 13 7 13 13 0 5-4 8-8 8-3 0-5-1-4-3 1-3 1-5-1-7 3-3 3-7 0-11z" fill="#4bcf86"/><path d="M0 15c1-5 6-7 11-6 3 0 6 2 7 5-6-2-9 2-8 7 1 4 4 7 8 8C8 32 0 24 0 15z" fill="#1479d4"/><path d="M12 14c-6 5-1 15 7 15 4-1 7-4 9-7-9 4-17 0-16-8z" fill="#0c4fa0"/></svg></button>
  <button class="app run" aria-label="Dosya Gezgini"><svg width="28" height="24" viewBox="0 0 28 24"><path d="M0 1h12l2 3-2 3H0z" fill="#e5a100"/><path d="M0 6l12-1 2-2h14v20H0z" fill="#ffd35c"/><path d="M5 23v-8c0-2 1-3 3-3h12c2 0 3 1 3 3v8h-5v-5h-8v5z" fill="#3a96dd"/></svg></button>
  <button class="app run" aria-label="Opera"><svg width="30" height="30" viewBox="0 0 30 30"><circle cx="15" cy="15" r="14" fill="none" stroke="#e0163c" stroke-width="1.800"/><ellipse cx="15" cy="15" rx="7" ry="12" fill="none" stroke="#e0163c" stroke-width="1.800"/><path d="M15 2c12 4 12 22 0 26" fill="none" stroke="#e0163c" stroke-width="1.500"/></svg></button>
  <button class="app run" aria-label="Visual Studio"><svg width="30" height="30" viewBox="0 0 30 30"><path d="M0 9l5-3v17l-5-3z" fill="#6b3fa0"/><path d="M21 0l2 1v9L6 24l-6-3z" fill="#7446a8"/><path d="M0 9l5-3 18 15v8l-2 1z" fill="#a86ee6"/><path d="M21 0l9 4v22l-9 4z" fill="#c48cf5"/></svg></button>
  <button class="app run" aria-label="Paint"><svg width="30" height="30" viewBox="0 0 30 30"><path d="M14 3c8 0 13 5 12 12s-7 13-13 12c-4-1 0-4-3-6S0 23 0 16C0 9 6 3 14 3z" fill="#b9def2"/><circle cx="5" cy="16" r="2.500" fill="#e8413a"/><circle cx="9" cy="11" r="2.500" fill="#55b04a"/><circle cx="15" cy="9" r="3" fill="#f5b014"/><circle cx="12" cy="18" r="2" fill="#1c1c1c"/><path d="M16 25l9-19 3 1-9 19-4 3z" fill="#f08a24"/><path d="M24 1h5v5l-3 3-2-2z" fill="#c79a63"/></svg></button>
  <button class="app current" aria-label="Form2"><svg width="29" height="27" viewBox="0 0 29 27"><path d="M11 1h16v15H11zM2 10h9v13H2zM12 17h11v8H12z" fill="none" stroke="#eee" stroke-width="2"/></svg></button>
  <div class="tray">
    <span><svg width="17" height="9" viewBox="0 0 17 9"><path d="M.5 8.500l8-8 8 8" fill="none" stroke="#fff" stroke-width="1.400"/></svg></span>
    <span><svg width="20" height="20" viewBox="0 0 20 20"><path d="M5 1h10l5 9-5 9H5l-5-9z" fill="#0f4f94"/><path d="M3 16l3-3M10 5c-5 2-5 6-1 6s3 4-2 4M12 8l-4 4M12 10c1 4-3 6-6 5" stroke="#fff" stroke-width="2" fill="none"/><circle cx="16" cy="4" r="3.600" fill="#f07838"/></svg></span>
    <span><svg width="20" height="20" viewBox="0 0 20 20"><path d="M11 1L2 6v8l8 5 8-4M11 1" fill="none" stroke="#d61f26" stroke-width="3"/><path d="M13 6c-7 0-7 8 0 8" fill="none" stroke="#999" stroke-width="3"/><path d="M13 4l5 6h-6z" fill="#fbc02d"/></svg></span>
    <span><svg width="15" height="11" viewBox="0 0 15 11"><path d="M5 0h10v11H5z" fill="#76b900"/><path d="M0 5c4-5 9-4 11 0-3 5-8 4-11 0z" fill="#3d6a12" stroke="#76b900"/></svg></span>
    <span><svg width="16" height="16" viewBox="0 0 16 16"><path d="M1 15C1 7 7 1 15 1M5 15C5 9 9 5 15 5M9 15c0-3 3-6 6-6" fill="none" stroke="#ddd" stroke-width="1.300"/><circle cx="14" cy="14" r="1.700" fill="#fff"/></svg></span>
    <span><svg width="20" height="15" viewBox="0 0 20 15"><path d="M5 4h13v9H5V8M18 6h2v5h-2" fill="none" stroke="#fff" stroke-width="1.400"/><path d="M7 6h9v5H7z" fill="#fff"/><path d="M1 0v3M4 0v3M0 3h5l-1 3H1zM2.500 6v5" fill="#fff" stroke="#fff"/></svg></span>
    <span><svg width="20" height="18" viewBox="0 0 20 18"><path d="M1 6h3l4-4v14l-4-4H1z" fill="none" stroke="#fff" stroke-width="1.300"/><path d="M11 6q2 3 0 6M14 4q4 5 0 10M17 1q5 8 0 16" fill="none" stroke="#fff" stroke-width="1.300"/></svg></span>
    <span><svg width="20" height="20" viewBox="0 0 20 20"><path d="M0 3q6 0 9-3 3 3 9 3c0 8-3 13-9 16C3 16 0 11 0 3z" fill="#fff"/><path d="M9 0v19M0 8.500h18" stroke="#1c1c1c" stroke-width="1.300"/><circle cx="14.500" cy="14" r="5.500" fill="#d8232f"/><path d="M12.500 12l4 4M16.500 12l-4 4" stroke="#fff" stroke-width="1.300"/></svg></span>
  </div>
  <time class="clock"><span>12:03</span><span>1.11.2022</span></time>
  <button class="action" aria-label="Bildirimler"><svg width="20" height="20" viewBox="0 0 20 20"><path d="M0 0h20v16h-7v4l-5-4H0z" fill="#fff"/><path d="M4 4.500h12M4 8.500h12M4 12.500h6" stroke="#222" stroke-width="1.300"/></svg><span class="badge">4</span></button>
</footer>
</body>
</html>
```
FILE: styles.css
```css
* { box-sizing: border-box; }
body { margin: 0; height: 100vh; overflow: hidden; display: flex; flex-direction: column; background: #fff; color: #1e1e1e; font: 14px/20px "Open Sans", "Noto Sans", sans-serif; }
button, input, select { font: inherit; color: inherit; border: 0; padding: 0; margin: 0; background: none; border-radius: 0; }
input:focus { outline: 0; }
h1, h2, h3, p, ul { margin: 0; padding: 0; font-size: inherit; font-weight: 400; list-style: none; }
b { font-weight: 400; }
svg { flex: none; display: block; }
.sprite { position: absolute; width: 0; height: 0; }
.desktop { position: relative; flex: 1; min-height: 0; overflow: hidden; }

/* File Explorer */
.explorer { height: 100%; display: flex; flex-direction: column; color: #000; }
.ex-title { display: flex; align-items: center; gap: 12px; height: 29px; padding-left: 2px; }
.bar { width: 1px; height: 16px; background: #888; }
.bar + svg { margin-left: 2px; }
.ex-name { color: #999; margin-left: -5px; }
.ex-win { margin-left: auto; display: flex; color: #888; }
.ex-win button { width: 58px; height: 29px; display: grid; place-items: center; }
.ex-win button:last-child { width: 64px; }
.ex-tabs { display: flex; height: 28px; font-size: 13px; color: #333; }
.ex-tabs > button { width: 70px; }
.ex-tabs .file { background: #0063b1; color: #fff; }
.ex-tabs .active { width: 60px; background: #f5f6f7; border: 1px solid #dcdddf; border-bottom: 0; }
.ex-tabs > button:nth-child(n+3) { width: 72px; }
.ex-tabs > button:nth-child(4) { width: 88px; }
.ex-help { margin-left: auto; display: flex; align-items: center; gap: 10px; padding-right: 3px; }
.ex-help button { width: 20px; height: 20px; border-radius: 50%; background: #0a66c2; color: #fff; font-weight: 600; line-height: 18px; }
.ribbon { display: flex; height: 114px; background: #f5f6f7; border-top: 1px solid #dcdddf; border-bottom: 1px solid #dcdddf; padding-top: 13px; }
.rb { width: 88px; display: flex; flex-direction: column; align-items: center; gap: 9px; font-size: 12px; line-height: 17px; color: #333; padding: 0 8px; }
.rb.copy { width: 50px; color: #888; padding: 0; margin-left: -5px; }
.rb.copy svg { margin: -4px 0 4px 20px; }
.ex-nav { display: flex; align-items: center; gap: 24px; height: 51px; padding-left: 16px; }
.ex-nav svg + svg + svg { margin-left: -6px; }
.ex-search { margin-left: auto; width: 400px; height: 40px; border: 1px solid #d9d9d9; margin-right: 12px; display: flex; align-items: center; padding-right: 11px; }
.ex-search input { flex: 1; }
.tree { flex: 1; padding-top: 20px; }
.tree li { display: flex; align-items: center; gap: 6px; height: 30px; padding: 2px 0 0 41px; white-space: nowrap; }
.tree .top, .tree .sel { padding-left: 30px; }
.tree .sel { background: #d9d9d9; width: 500px; padding-left: 32px; }
.tree .top { margin-top: 10px; }
.ex-status { display: flex; align-items: center; height: 30px; padding: 0 4px 0 18px; color: #1a3a5c; }
.views { margin-left: auto; display: flex; }
.views button { width: 28px; height: 29px; display: grid; place-items: center; }
.views .on { background: #cce8f6; border: 1px solid #26a0da; }

/* Visual Studio */
.vs { position: absolute; inset: 45px 92px 48px 102px; display: flex; flex-direction: column; border: 1px solid #47474f; background: #5d6b99; box-shadow: 0 3px 18px rgba(0,0,0,.45); }
.vs-head { background: #ccd5f0; height: 110px; }
.menu-row { display: flex; align-items: center; height: 42px; }
.vs-logo { margin: 0 15px 2px 15px; }
.menu { display: flex; gap: 25px; }
.menu u { text-underline-offset: 3px; }
.search { display: flex; align-items: center; height: 28px; border: 1px solid #8591a8; background: #fdfdfd; color: #717171; }
.search input { flex: 1; min-width: 0; height: 24px; padding-left: 5px; }
.search input::placeholder { color: #717171; opacity: 1; }
.search > svg { margin-right: 9px; }
.quick { width: 276px; margin: 0 0 2px auto; }
.solution { color: #42508c; margin: 2px 0 0 32px; width: 225px; }
.vs-win { display: flex; color: #42508c; }
.vs-win button { width: 58px; height: 30px; display: grid; place-items: center; }
.tools { display: flex; align-items: center; height: 31px; color: #1e1e1e; }
.tools-left { display: flex; align-items: center; width: 811px; height: 31px; padding-left: 12px; }
.fill { flex: 1; }
.tool { flex: none; width: 27px; height: 27px; display: grid; place-items: center; }
.dim { color: #a7afc8; }
.gap14 { flex: none; width: 14px; }
.sep { flex: none; width: 2px; height: 24px; background: #9aaad2; margin: 0 4px; }
.gripcell { flex: none; width: 12px; display: grid; place-items: center; }
.morecell { flex: none; width: 16px; height: 10px; margin-top: 12px; display: grid; place-items: center; }
.morecell.tall { height: 22px; margin-top: 0; }
.combo { appearance: none; height: 26px; width: 188px; padding: 0 4px; border: 1px solid #8591a8; background: #f2f5fc url("data:image/svg+xml,%3Csvg xmlns='http://www.w3.org/2000/svg' width='8' height='4'%3E%3Cpath d='M0 0h8L4 4z' fill='%231e1e1e'/%3E%3C/svg%3E") no-repeat right 5px center; }
.combo.off { border-color: #a3a5aa; opacity: 1; background: #dee6f3 url("data:image/svg+xml,%3Csvg xmlns='http://www.w3.org/2000/svg' width='8' height='4'%3E%3Cpath d='M0 0h8L4 4z' fill='%23999da8'/%3E%3C/svg%3E") no-repeat right 5px center; }
.combo.w80 { width: 82px; margin: 0 7px 0 12px; }
.combo.w140 { width: 138px; margin-right: 10px; }
.share { display: flex; align-items: center; gap: 7px; margin-left: 24px; }
.feedback { margin-left: 26px; }
.admin { margin-left: auto; margin-right: 18px; width: 93px; height: 32px; background: #5f6da3; color: #fff; font-weight: 600; font-size: 13px; }
.tools.second { height: 30px; }
.thread { width: 300px; margin-left: 575px; margin-right: 4px; }
.stack { color: #6d7180; margin-left: 3px; width: 111px; white-space: nowrap; }
.frame { width: 299px; margin-right: 6px; }
.tools .thread, .tools .frame { height: 27px; }
.vs-main { flex: 1; min-height: 0; display: flex; padding: 0 0 8px 9px; }
.docks { flex: 1; min-width: 0; display: flex; flex-direction: column; gap: 10px; }
.upper { flex: 1; min-height: 0; display: grid; grid-template-columns: 1fr 382px; gap: 10px; }
.lower { flex: none; display: grid; grid-template-columns: 828fr 836fr; grid-template-rows: minmax(0, 1fr); gap: 10px; height: 238px; padding-right: 1px; }
.doc { display: flex; flex-direction: column; min-height: 0; }
.doc-tabs { display: flex; justify-content: flex-end; align-items: center; gap: 11px; height: 35px; padding-top: 6px; padding-right: 2px; color: #dfe4f6; border-bottom: 2px solid #f5cc84; }
.docgear { --hole: #5d6b99; }
.designer { flex: 1; min-height: 0; display: flex; background: #f5f5f5; }
.canvas { flex: 1; padding-left: 20px; }
.form-preview { width: 509px; height: 100%; background: #ffbfbf; border: solid #b9d1ea; border-width: 0 7px; outline: 1px solid #000; clip-path: inset(0 -1px); }
.wscroll { width: 20px; background: #f0f0f0; display: flex; flex-direction: column; align-items: center; padding: 8px 0; }
.wscroll .thumb { flex: 1; width: 18px; background: #cdcdcd; margin: 17px 0 32px; }
.panel-title { display: flex; align-items: center; justify-content: space-between; flex: none; height: 27px; background: #40568d; color: #fff; padding: 0 9px 0 4px; }
.ctl { display: flex; align-items: center; gap: 11px; color: #a9b5dc; }
.diag { display: flex; flex-direction: column; min-height: 0; margin-top: 9px; }
.charts { display: flex; flex: 1; min-height: 0; border-bottom: 4px solid #d8d8e0; background: #f8f9ff; overflow: hidden; }
.charts-body { flex: 1; overflow: hidden; color: #1e1e1e; }
.diag-tools { display: flex; height: 31px; background: #ccd5f0; padding-left: 6px; }
.diag-tools button { width: 34px; display: grid; place-items: center; padding-top: 4px; }
.diag-tools i { width: 2px; height: 20px; background: #9aaad2; margin: 0 2px 0 6px; }
.dgear { color: #424242; --hole: #ccd5f0; }
.session { height: 27px; line-height: 27px; padding-left: 13px; color: #000; font-weight: 500; }
.ruler { height: 29px; border: solid #8e9bb0; border-width: 1px 0; }
.ruler text { font-size: 14px; fill: #6a6a6a; }
.group { display: flex; align-items: center; gap: 4px; height: 26px; padding-left: 7px; color: #000; font-weight: 500; }
.group.mem { height: 30px; }
.group.cpu { height: 25px; }
.legend { display: flex; align-items: center; gap: 4px; margin-left: 30px; }
.legend svg + svg { margin-left: 8px; }
.legend b + svg { margin-left: 9px; }
.legend b + svg + b { margin-left: -1px; }
.plot { display: flex; }
.box { background: #f8f9ff; outline: 1px solid #8e9bb0; outline-offset: -1px; }
.lbl { width: 45px; padding-right: 6px; display: flex; flex-direction: column; align-items: flex-end; justify-content: space-between; }
.lbl.mid { justify-content: center; padding-right: 10px; padding-top: 4px; }
.lbl.right { align-items: flex-start; padding-left: 6px; }
.vscroll { flex: none; width: 22px; background: #e8e8ec; display: flex; flex-direction: column; align-items: center; padding: 7px 0 6px; fill: #868999; }
.thumb { background: #c2c3c9; }
.vscroll .thumb { width: 13px; }
.vscroll .end { margin-top: auto; }
.t1 { flex: 1; margin: 7px 0 70px; }
.t2 { flex: 1; margin: 7px 0 23px; }
.t3 { height: 12px; margin-top: 6px; }
.diag-tabs { flex: none; display: flex; gap: 3px; height: 31px; background: #fff; padding: 5px 5px 0; border-bottom: 2px solid #dee6f5; }
.diag-tabs button { padding: 0 6px; }
.diag-tabs .on { background: #dee6f5; padding: 0 7px; }
.summary { flex: none; height: 169px; display: flex; background: #f8f9ff; }
.sum-body { flex: 1; overflow: hidden; }
.sum-body h3 { height: 29px; line-height: 29px; padding-left: 11px; background: #f5f5f5; color: #000; border-top: 1px solid #ccd0e0; border-bottom: 1px solid #ccd0e0; font-weight: 500; }
.sum-body button { display: flex; align-items: center; gap: 11px; width: 100%; height: 36px; padding: 2px 0 0 20px; }

.dock { display: flex; flex-direction: column; min-width: 0; min-height: 0; }
.dock-tools { display: flex; align-items: center; flex: none; height: 32px; background: #ccd5f0; }
.drop { width: 14px; height: 100%; border-left: 1px solid #8591a8; background: #f2f5fc; display: grid; place-items: center; color: #000; }
.auto-search { width: 280px; margin-bottom: 2px; margin-right: 11px; }
.auto-search > svg, .err-search > svg { margin-right: 3px; }
.arrow { color: #a7afc8; margin-right: 13px; }
.depth-label { color: #6d7180; margin-right: 10px; }
.combo.depth { width: 50px; height: 25px; }
.autos-body { flex: 1; display: flex; background: #fff; align-items: stretch; min-height: 0; }
table { border-collapse: collapse; table-layout: fixed; width: 100%; flex: 1; align-self: flex-start; }
th { font-weight: 400; text-align: left; padding: 0 6px; }
.autos-body th { height: 25px; color: #999; border-right: 1px solid #e3e6f5; border-bottom: 1px solid #e3e6f5; padding: 0 5px; }
.autos-body th:last-child { border-right: 0; }
.a0 { width: 11px; } .a1 { width: 264px; } .a2 { width: 398px; }
.faint { background: #f4f4f7; fill: #d3d4db; width: 21px; }
.dock-tabs { flex: none; display: flex; gap: 3px; height: 24px; color: #cfd8f5; background: #5d6b99; }
.dock-tabs button { height: 23px; padding: 0 6px; background: #40568d; white-space: nowrap; }
.dock-tabs .on { height: 24px; background: #fbfbff; color: #1e1e1e; }
.err-tools { padding-left: 9px; gap: 4px; }
.vr { width: 2px; height: 22px; background: #9aaad2; }
.err-tools .combo { margin-right: 4px; height: 25px; }
.vr + .combo { margin-left: 4px; }
.flt { display: flex; align-items: center; gap: 9px; height: 27px; padding: 0 8px 0 3px; border: 1px solid #8a6100; background: #fdebc4; white-space: nowrap; }
.flt.plain { border-color: transparent; background: none; }
.flt.sq { width: 27px; padding-left: 2px; }
.err-search { flex: none; height: 27px; margin-bottom: 3px; }
.errors { background: #ccd5f0; }
.err-body { flex: 1; min-height: 0; display: grid; grid-template-columns: 1fr 21px; grid-template-rows: minmax(0, 1fr) 21px; background: #fff; }
.err-body .vscroll { width: 21px; }
.err-view { overflow: hidden; min-height: 0; background: #f8f9ff; padding-left: 3px; }
.err-view th { height: 27px; background: #f5f5f5; border-right: 1px solid #ccd0e0; border-bottom: 1px solid #ccd0e0; padding: 0 5px; }
.err-view th:last-child { border-right: 0; }
.err-view .sorter { vertical-align: top; padding: 3px 5px 0 20px; }
.err-view td { padding: 3px 0 0 6px; vertical-align: top; white-space: nowrap; }
.e0 { width: 30px; } .e1 { width: 33px; } .e2 { width: 62px; } .e3 { width: 125px; } .e4 { width: 188px; } .e5 { width: 187px; } .e6 { width: 44px; }
.hscroll { display: flex; align-items: center; background: #e8e8ec; padding: 0 7px; fill: #868999; }
.hthumb { flex: 1; height: 11px; background: #c2c3c9; margin: 0 29px 0 7px; }
.side { width: 40px; display: flex; flex-direction: column; gap: 15px; align-items: flex-end; padding-top: 8px; color: #dfe4f6; }
.side button { writing-mode: vertical-rl; width: 38px; border-right: 8px solid #40527f; line-height: 30px; text-align: left; padding-bottom: 3px; }

.vs-status { flex: none; height: 30px; display: flex; align-items: center; background: #a24a40; color: #fff; padding: 0 6px 0 5px; }
.ready { margin: 0 auto 0 10px; }
.vs-status button { display: flex; align-items: center; gap: 8px; margin-right: 30px; }
.vs-status .bell { position: relative; margin-right: 28px; width: 24px; height: 24px; }
.count { position: absolute; right: 0; bottom: 0; width: 16px; height: 16px; border-radius: 50%; background: #fff; color: #222; font-size: 12px; line-height: 16px; }
.bell svg { margin-bottom: 5px; }
.sizer { margin-top: 8px; }

/* Form2 */
.form2 { position: absolute; left: 104px; top: 96px; width: 802px; height: 489px; background: #f0f0f0; border: 1px solid #5a5a62; box-shadow: 0 4px 18px rgba(0,0,0,.4); color: #000; }
.form2 header { display: flex; align-items: center; height: 37px; background: #fff; padding-left: 11px; gap: 7px; }
.form-win { margin-left: auto; display: flex; }
.form-win button { width: 59px; height: 36px; display: grid; place-items: center; }
.form2 p { padding: 177px 0 0 227px; font: 700 33px/36px "Liberation Serif", serif; }
.resize { position: absolute; right: 0; bottom: 0; }

/* Taskbar */
.taskbar { flex: none; height: 50px; display: flex; align-items: stretch; background: #1c1c1c; color: #fff; }
.app { width: 62px; display: grid; place-items: center; border: solid transparent; border-width: 3px 0; }
.app.start { width: 60px; }
.app.find { width: 60px; margin-right: 3px; }
.run { width: 52px; margin: 0 5px; border-top-width: 3px; border-bottom-color: #76b9ed; }
.current { background: #4a4a4a; border-bottom-color: #76b9ed; }
.app.current { border-top-color: #4a4a4a; }
.tray { display: flex; margin-left: auto; }
.tray span { width: 30px; display: grid; place-items: center; }
.clock { width: 86px; display: flex; flex-direction: column; justify-content: center; text-align: center; line-height: 23px; }
.action { position: relative; width: 60px; margin-right: 6px; border-right: 1px solid #777; display: grid; place-items: center start; padding: 0 0 2px 15px; }
.badge { position: absolute; left: 24px; bottom: 4px; width: 21px; height: 21px; border: 1px solid #777; border-radius: 50%; background: #333; font-weight: 600; line-height: 19px; font-size: 13px; }
```
